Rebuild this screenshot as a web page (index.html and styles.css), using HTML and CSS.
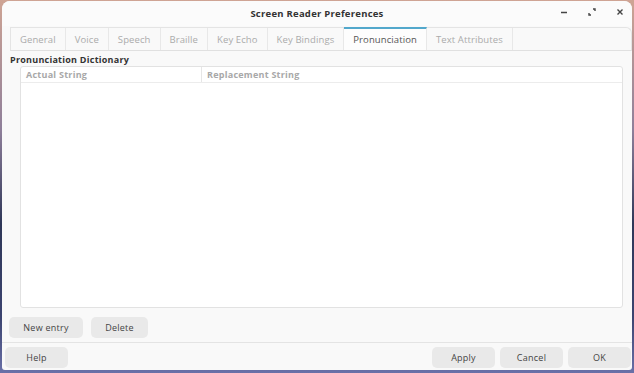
FILE: index.html
```html
<!DOCTYPE html>
<html lang="en">

<head>
    <meta charset="UTF-8">
    <meta name="viewport" content="width=device-width, initial-scale=1.0">
    <title>Screen Reader Preferences</title>
    <link rel="stylesheet" href="styles.css">
</head>

<body>
    <div class="window">
        <div class="titlebar">
            <div class="title">Screen Reader Preferences</div>
            <div class="controls">
                <span class="ctl">
                    <svg width="10" height="10" viewBox="0 0 10 10"><path d="M2 5.5h6" stroke="#444" stroke-width="1.4"/></svg>
                </span>
                <span class="ctl">
                    <svg width="10" height="10" viewBox="0 0 10 10"><path d="M6 2h2v2M4 8H2V6" stroke="#444" stroke-width="1.4" fill="none"/></svg>
                </span>
                <span class="ctl">
                    <svg width="10" height="10" viewBox="0 0 10 10"><path d="M2.5 2.5l5 5M7.5 2.5l-5 5" stroke="#444" stroke-width="1.4"/></svg>
                </span>
            </div>
        </div>

        <div class="tabs">
            <div class="tab">General</div>
            <div class="tab">Voice</div>
            <div class="tab">Speech</div>
            <div class="tab">Braille</div>
            <div class="tab">Key Echo</div>
            <div class="tab">Key Bindings</div>
            <div class="tab active">Pronunciation</div>
            <div class="tab">Text Attributes</div>
        </div>

        <div class="page">
            <div class="section-label">Pronunciation Dictionary</div>
            <div class="tree">
                <div class="tree-header">
                    <div class="col col-actual">Actual String</div>
                    <div class="col col-replace">Replacement String</div>
                </div>
                <div class="tree-body"></div>
            </div>
            <div class="entry-buttons">
                <button class="btn btn-new">New entry</button>
                <button class="btn btn-delete">Delete</button>
            </div>
        </div>

        <div class="footer">
            <button class="btn btn-help">Help</button>
            <div class="spacer"></div>
            <button class="btn btn-foot">Apply</button>
            <button class="btn btn-foot">Cancel</button>
            <button class="btn btn-foot">OK</button>
        </div>
    </div>
</body>

</html>
```

FILE: styles.css
```css
html,
body {
    height: 100%;
}

body {
    margin: 0;
    padding: 1px 2px 3px 2px;
    box-sizing: border-box;
    background: linear-gradient(180deg, #cfa494 0%, #8e7f9a 35%, #2f3758 60%, #3c4470 85%, #6a70a8 100%);
    font-family: 'Open Sans', 'Noto Sans', Arial, sans-serif;
    font-size: 9px;
    letter-spacing: 0.25px;
    color: #444;
}

.window {
    height: 100%;
    background: #f9f9f9;
    border-radius: 8px 8px 3px 3px;
    display: flex;
    flex-direction: column;
    overflow: hidden;
}

.titlebar {
    height: 25px;
    flex: none;
    display: flex;
    align-items: center;
    justify-content: center;
    position: relative;
    background: #fbfbfb;
}

.title {
    font-weight: 700;
    font-size: 9.5px;
    color: #333;
}

.controls {
    position: absolute;
    right: 7px;
    top: 6px;
    display: flex;
    gap: 18px;
}

.ctl {
    width: 10px;
    height: 10px;
    display: block;
}

.ctl svg {
    display: block;
}

.tabs {
    flex: none;
    display: flex;
    height: 22px;
    margin: 1px 0 0 8px;
    border: 1px solid #e4e4e4;
    border-bottom-color: #e0e0e0;
    border-radius: 0 6px 0 0;
    background: #f9f9f9;
}

.tab {
    display: flex;
    align-items: center;
    padding: 0 9px;
    letter-spacing: 0.1px;
    color: #ababab;
    border-right: 1px solid #e8e8e8;
    font-size: 9.5px;
}

.tab.active {
    color: #555;
    background: #fdfdfd;
    border-top: 2px solid #52a8cc;
    margin-top: -1px;
}

.page {
    flex: 1;
    display: flex;
    flex-direction: column;
    padding: 0 9px 0 6px;
}

.section-label {
    font-weight: 700;
    color: #333;
    font-size: 9px;
    padding: 2px 0 0 2px;
    height: 12px;
}

.tree {
    flex: 1;
    margin: 1px 0 0 12px;
    background: #fff;
    border: 1px solid #e2e2e2;
    border-radius: 3px;
    display: flex;
    flex-direction: column;
}

.tree-header {
    display: flex;
    height: 15px;
    border-bottom: 1px solid #ececec;
}

.col {
    display: flex;
    align-items: center;
    font-weight: 700;
    color: #a8a8a8;
    font-size: 9px;
}

.col-actual {
    width: 175px;
    padding-left: 5px;
    border-right: 1px solid #e6e6e6;
}

.col-replace {
    padding-left: 5px;
}

.tree-body {
    flex: 1;
}

.entry-buttons {
    display: flex;
    gap: 8px;
    padding: 9px 0 4px 1px;
}

.btn {
    font-family: inherit;
    font-size: 9px;
    letter-spacing: 0.25px;
    color: #444;
    background: #e9e9e9;
    border: none;
    border-radius: 5px;
    height: 21px;
    padding: 0;
    cursor: pointer;
}

.btn-new {
    width: 74px;
}

.btn-delete {
    width: 57px;
}

.footer {
    flex: none;
    display: flex;
    gap: 5px;
    padding: 4px 1px 2px 3px;
    border-top: 1px solid #e4e4e4;
}

.spacer {
    flex: 1;
}

.btn-help {
    width: 63px;
}

.btn-foot {
    width: 63px;
}
```
